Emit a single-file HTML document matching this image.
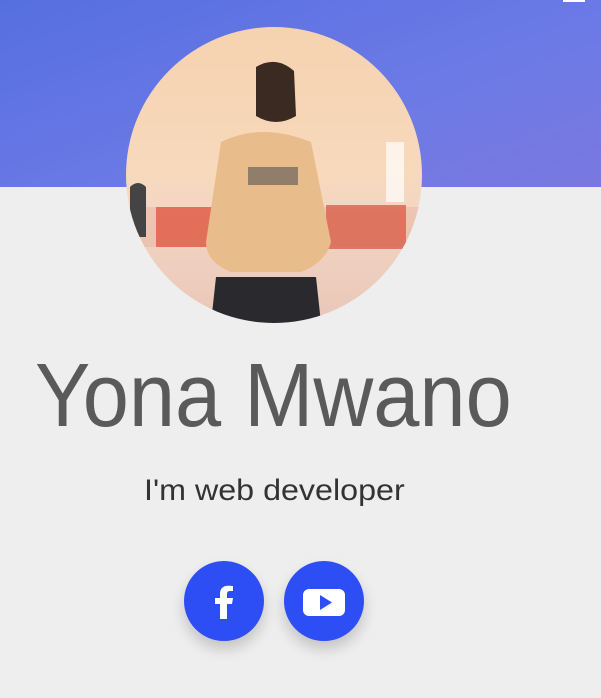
<!DOCTYPE html>
<html><head><style>
body{margin:0;width:601px;height:698px;background:#eeeeee;overflow:hidden;position:relative;font-family:"Liberation Sans",sans-serif}
.hdr{position:absolute;left:0;top:0;width:601px;height:187px;background:linear-gradient(160deg,#566fe0,#6c7ae6 60%,#7a78e0)}
.av{position:absolute;left:126px;top:27px;width:296px;height:296px;border-radius:50%;overflow:hidden;background:linear-gradient(180deg,#f6d2b0 0%,#f7d9bc 50%,#f3d6c4 62%,#e9c7b8 100%)}
.name{position:absolute;left:35px;top:345px;font-size:90px;font-weight:300;color:#5a5a5a;white-space:nowrap;transform:scaleX(0.922);transform-origin:0 0}
.sub{position:absolute;left:144px;top:474px;font-size:30px;color:#333;white-space:nowrap;transform:scaleX(1.075);transform-origin:0 0}
.btn{position:absolute;top:561px;width:80px;height:80px;border-radius:50%;background:#2d4ef5;box-shadow:0 8px 14px rgba(0,0,0,.18)}
</style></head><body>
<div class="hdr"></div>
<div style="position:absolute;left:563px;top:0;width:22px;height:2px;background:#fff"></div>
<div class="av">
<svg width="296" height="296" viewBox="0 0 296 296">
<rect x="0" y="180" width="296" height="40" fill="#e8b4a0" opacity=".5"/>
<rect x="30" y="180" width="70" height="40" fill="#e05a45" opacity=".8"/>
<rect x="200" y="178" width="80" height="44" fill="#d9604c" opacity=".8"/>
<rect x="260" y="115" width="18" height="60" fill="#fff" opacity=".7"/>
<path d="M130 40 q20-12 38 4 l2 45 q-20 12-40 0z" fill="#3a2a22"/>
<path d="M95 115 q40-20 90 0 l20 100 q-5 20-30 30 l-70 0 q-25-10-25-30z" fill="#e9bc8c"/>
<path d="M90 250 l100 0 l5 46 l-110 0z" fill="#2a2a2e"/>
<rect x="122" y="140" width="50" height="18" fill="#555" opacity=".6"/>
<path d="M4 160 q8-8 16 0 l0 50 l-16 0z" fill="#444"/>
</svg>
</div>
<div class="name">Yona Mwano</div>
<div class="sub">I'm web developer</div>
<div class="btn" style="left:184px"><svg width="80" height="80" viewBox="0 0 80 80"><path d="M43 58V43h5l1-6h-6v-4c0-2 1-3 3-3h3v-5c-1 0-3-.3-5-.3-5 0-8 3-8 8v4.3h-5v6h5v15z" fill="#fff"/></svg></div>
<div class="btn" style="left:284px"><svg width="80" height="80" viewBox="0 0 80 80"><rect x="19" y="28" width="42" height="27" rx="6" fill="#fff"/><path d="M36 34v15l12-7.5z" fill="#2d4ef5"/></svg></div>
</body></html>
